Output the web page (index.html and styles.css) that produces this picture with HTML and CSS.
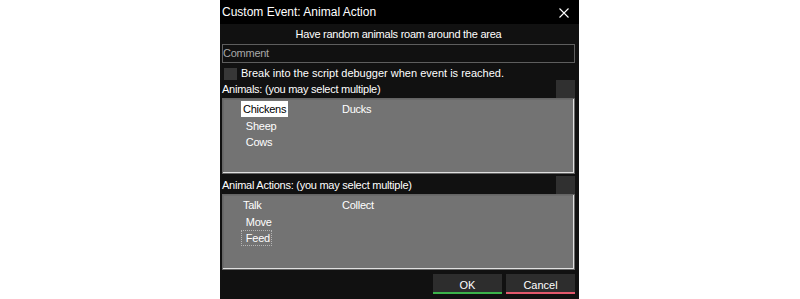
FILE: index.html
```html
<!DOCTYPE html>
<html>
<head>
<meta charset="utf-8">
<link rel="stylesheet" href="styles.css">
</head>
<body>
<div class="dialog">
  <div class="titlebar">
    <span class="title">Custom Event: Animal Action</span>
    <span class="close"><svg width="10" height="10" viewBox="0 0 10 10"><path d="M0.5 0.5 L9.5 9.5 M9.5 0.5 L0.5 9.5" stroke="#fff" stroke-width="1.1" fill="none"/></svg></span>
  </div>
  <div class="body">
    <div class="desc">Have random animals roam around the area</div>
    <div class="comment">Comment</div>
    <div class="check"><span class="box"></span><span class="check-label">Break into the script debugger when event is reached.</span></div>
    <div class="section-head"><span>Animals: (you may select multiple)</span><span class="sq"></span></div>
    <div class="listbox">
      <span class="item selected">Chickens</span>
      <span class="item">&nbsp;Sheep</span>
      <span class="item">&nbsp;Cows</span>
      <span class="item">Ducks</span>
    </div>
    <div class="section-head second"><span>Animal Actions: (you may select multiple)</span><span class="sq"></span></div>
    <div class="listbox">
      <span class="item">Talk</span>
      <span class="item">&nbsp;Move</span>
      <span class="item focus">&nbsp;Feed</span>
      <span class="item">Collect</span>
    </div>
    <div class="buttons">
      <div class="btn ok">OK</div>
      <div class="btn cancel">Cancel</div>
    </div>
  </div>
</div>
</body>
</html>
```
FILE: styles.css
```css
html, body {
  margin: 0;
  padding: 0;
  background: #fff;
}
body {
  display: flex;
  justify-content: center;
  font-family: "Liberation Sans", Arial, sans-serif;
}
.dialog {
  width: 359px;
  height: 299px;
  margin-right: 1px;
  background: #111111;
  color: #fff;
  overflow: hidden;
}
.titlebar {
  height: 24px;
  background: #000;
  display: flex;
  align-items: center;
  justify-content: space-between;
  padding: 0 10px 0 2px;
}
.title {
  font-size: 12px;
  line-height: 24px;
  color: #fff;
}
.close {
  display: flex;
  width: 10px;
  height: 10px;
  margin-top: 1px;
}
.body {
  padding: 0 4px 0 2px;
  font-size: 11px;
  letter-spacing: -0.25px;
}
.desc {
  height: 20px;
  line-height: 20px;
  text-align: center;
}
.comment {
  box-sizing: border-box;
  height: 19px;
  border: 1px solid #5e5e5e;
  line-height: 17px;
  color: #a8a8a8;
  padding-left: 0;
}
.check {
  display: flex;
  align-items: center;
  height: 13px;
  margin-top: 4px;
  padding-left: 2px;
}
.box {
  width: 13px;
  height: 12px;
  background: #373737;
  margin-right: 4px;
}
.check-label {
  line-height: 13px;
  letter-spacing: 0;
}
.section-head {
  display: flex;
  justify-content: space-between;
  height: 18px;
  line-height: 18px;
  margin-top: 0;
}
.section-head.second {
  margin-top: 2px;
}
.sq {
  width: 19px;
  height: 18px;
  background: #303030;
}
.listbox {
  box-sizing: border-box;
  height: 76px;
  background: #737373;
  border: 1px solid #646464;
  box-shadow: inset -1px -1px 0 #e0e0e0, inset 1px 1px 0 #6a6a6a;
  padding: 2px 0 0 18px;
  display: grid;
  grid-auto-flow: column;
  grid-template-rows: repeat(3, 16.5px);
  grid-auto-columns: 99px;
  align-content: start;
}
.item {
  justify-self: start;
  height: 16px;
  line-height: 16px;
  padding: 0 2px;
  white-space: pre;
  color: #fff;
  box-sizing: border-box;
}
.item.selected {
  background: #fff;
  color: #000;
}
.item.focus {
  outline: 1px dotted #b4b4b4;
  outline-offset: -1px;
}
.buttons {
  display: flex;
  justify-content: flex-end;
  gap: 4px;
  margin-top: 4px;
}
.btn {
  box-sizing: border-box;
  width: 69px;
  height: 20px;
  background: #2d2d2d;
  text-align: center;
  padding-top: 4px;
  line-height: 14px;
  letter-spacing: 0;
  color: #fff;
}
.btn.ok {
  border-bottom: 2px solid #3bb34a;
}
.btn.cancel {
  border-bottom: 2px solid #e2596c;
}
```
